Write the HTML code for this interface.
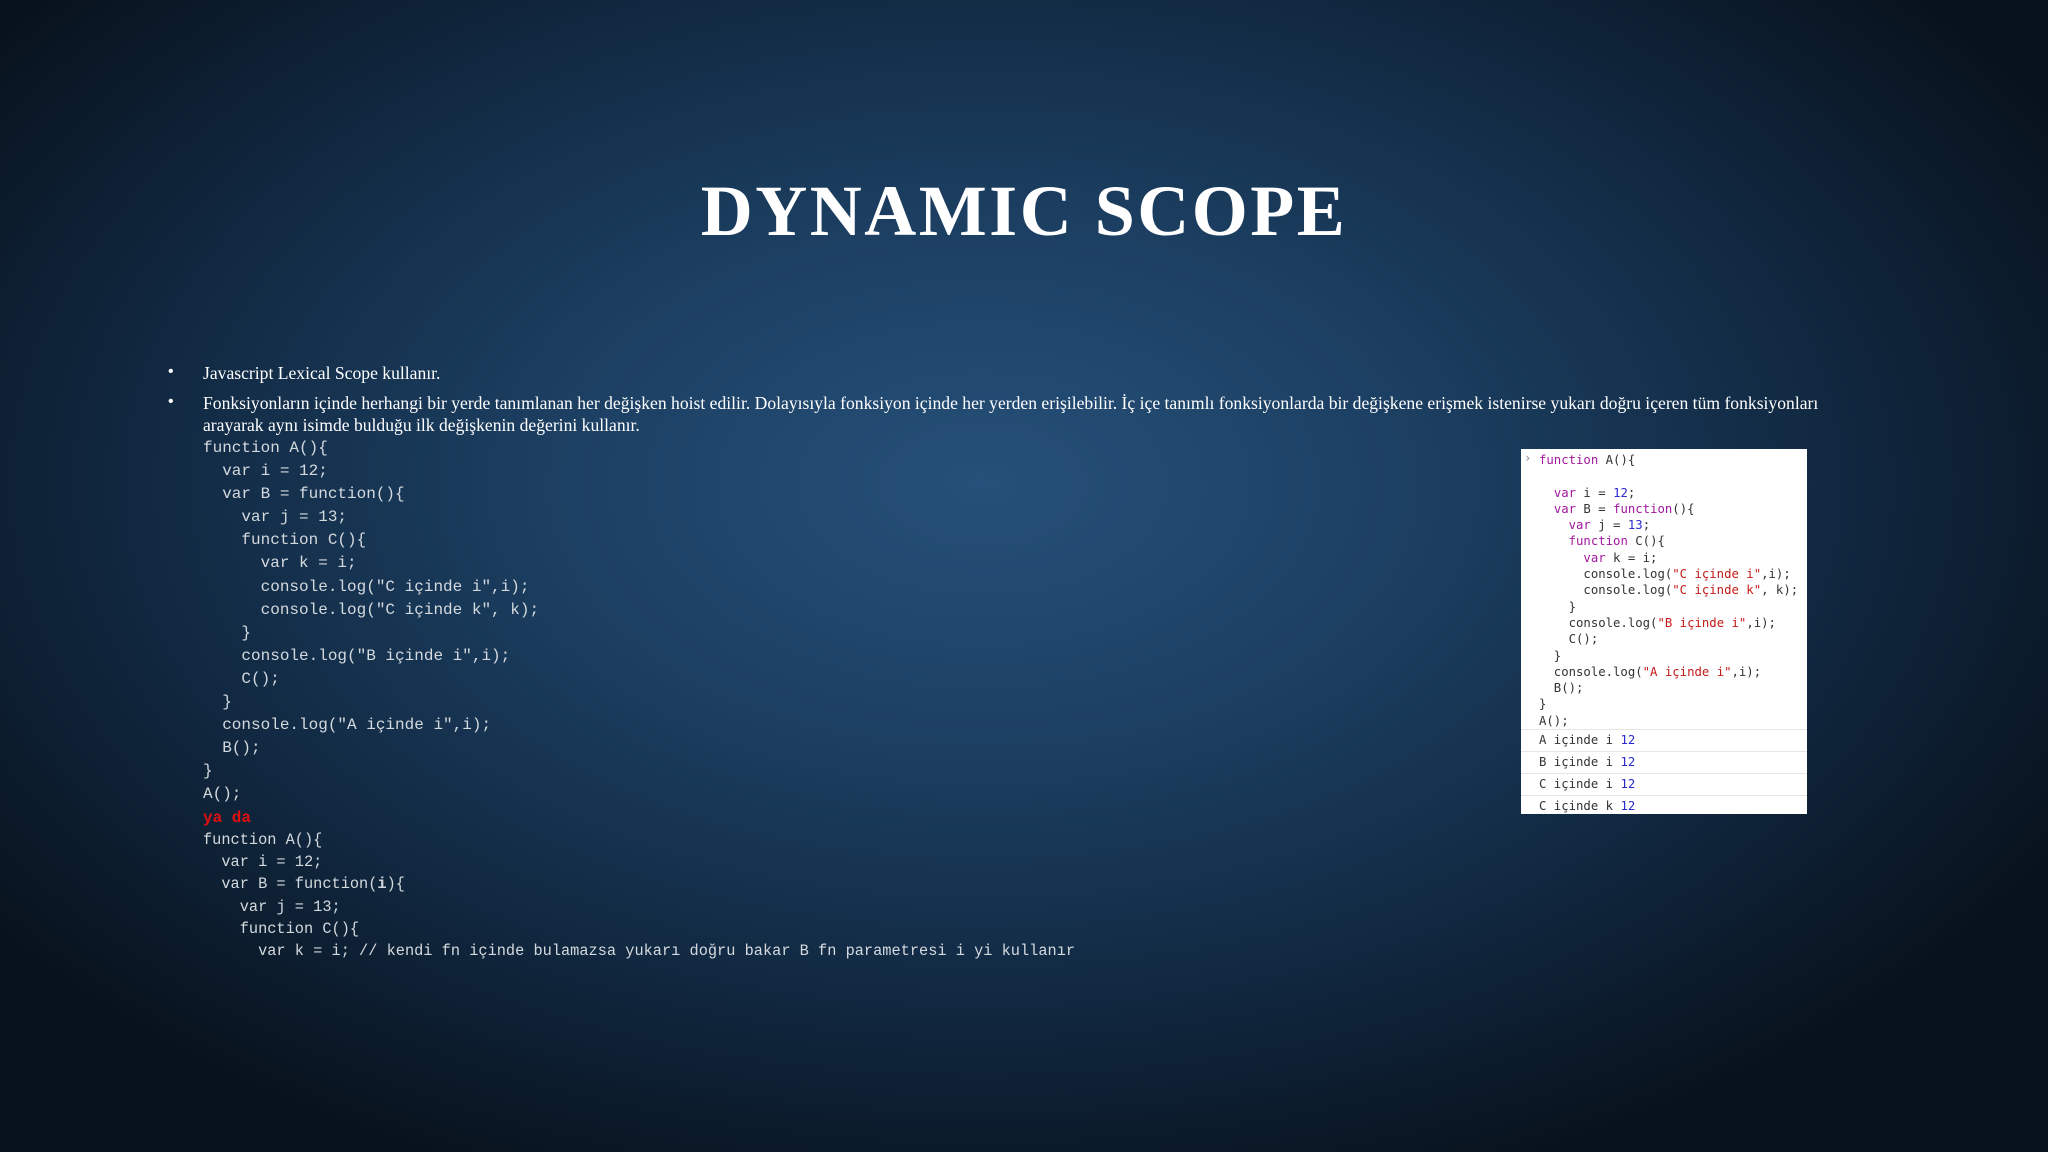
<!DOCTYPE html>
<html><head><meta charset="utf-8"><style>
html,body{margin:0;padding:0}
body{width:2048px;height:1152px;overflow:hidden;position:relative;
background:radial-gradient(ellipse 60% 65% at 48% 42%,#265079 0%,#1c3f62 35%,#122b45 65%,#08121d 100%);}
.t{position:absolute;left:0;width:2048px;top:170px;text-align:center;font:bold 72px "Liberation Serif",serif;color:#fff;letter-spacing:2.5px}
.b{position:absolute;font:17.6px "Liberation Serif",serif;color:#fff;white-space:nowrap}
.dot{position:absolute;left:168px;font:16px sans-serif;color:#fff}
pre{margin:0;position:absolute;left:203px;font:16px "Liberation Mono",monospace;color:#d4d9de;line-height:23.1px}
.red{color:#e01010;font-weight:bold}
.box{position:absolute;left:1521px;top:449px;width:286px;height:365px;background:#fff;font:12.3px "DejaVu Sans Mono",monospace;color:#333}
.box pre{position:static;font:inherit;color:#333;line-height:16.3px;padding:3px 0 0 18px}
.k{color:#a2189e}.n{color:#2a2ad0}.s{color:#c41a16}
.row{border-top:1px solid #e6e6e6;height:21px;line-height:21px;padding-left:18px;white-space:pre}
</style></head><body>
<div class="t">DYNAMIC SCOPE</div>
<div class="dot" style="top:363px">•</div>
<div class="dot" style="top:393px">•</div>
<div class="b" style="left:203px;top:363px">Javascript Lexical Scope kullanır.</div>
<div class="b" style="left:203px;top:393px">Fonksiyonların içinde herhangi bir yerde tanımlanan her değişken hoist edilir. Dolayısıyla fonksiyon içinde her yerden erişilebilir. İç içe tanımlı fonksiyonlarda bir değişkene erişmek istenirse yukarı doğru içeren tüm fonksiyonları</div>
<div class="b" style="left:203px;top:415px">arayarak aynı isimde bulduğu ilk değişkenin değerini kullanır.</div>
<pre style="top:437px">function A(){
  var i = 12;
  var B = function(){
    var j = 13;
    function C(){
      var k = i;
      console.log("C içinde i",i);
      console.log("C içinde k", k);
    }
    console.log("B içinde i",i);
    C();
  }
  console.log("A içinde i",i);
  B();
}
A();
<span class="red">ya da</span></pre>
<pre style="top:829px;line-height:22.2px;font-size:15.3px">function A(){
  var i = 12;
  var B = function(<b>i</b>){
    var j = 13;
    function C(){
      var k = i; // kendi fn içinde bulamazsa yukarı doğru bakar B fn parametresi i yi kullanır</pre>
<div class="box"><span style="position:absolute;left:3px;top:2px;color:#888">›</span><pre><span class="k">function</span> A(){

  <span class="k">var</span> i = <span class="n">12</span>;
  <span class="k">var</span> B = <span class="k">function</span>(){
    <span class="k">var</span> j = <span class="n">13</span>;
    <span class="k">function</span> C(){
      <span class="k">var</span> k = i;
      console.log(<span class="s">"C içinde i"</span>,i);
      console.log(<span class="s">"C içinde k"</span>, k);
    }
    console.log(<span class="s">"B içinde i"</span>,i);
    C();
  }
  console.log(<span class="s">"A içinde i"</span>,i);
  B();
}
A();</pre>
<div class="row">A içinde i <span class="n">12</span></div>
<div class="row">B içinde i <span class="n">12</span></div>
<div class="row">C içinde i <span class="n">12</span></div>
<div class="row">C içinde k <span class="n">12</span></div>
</div>
</body></html>
